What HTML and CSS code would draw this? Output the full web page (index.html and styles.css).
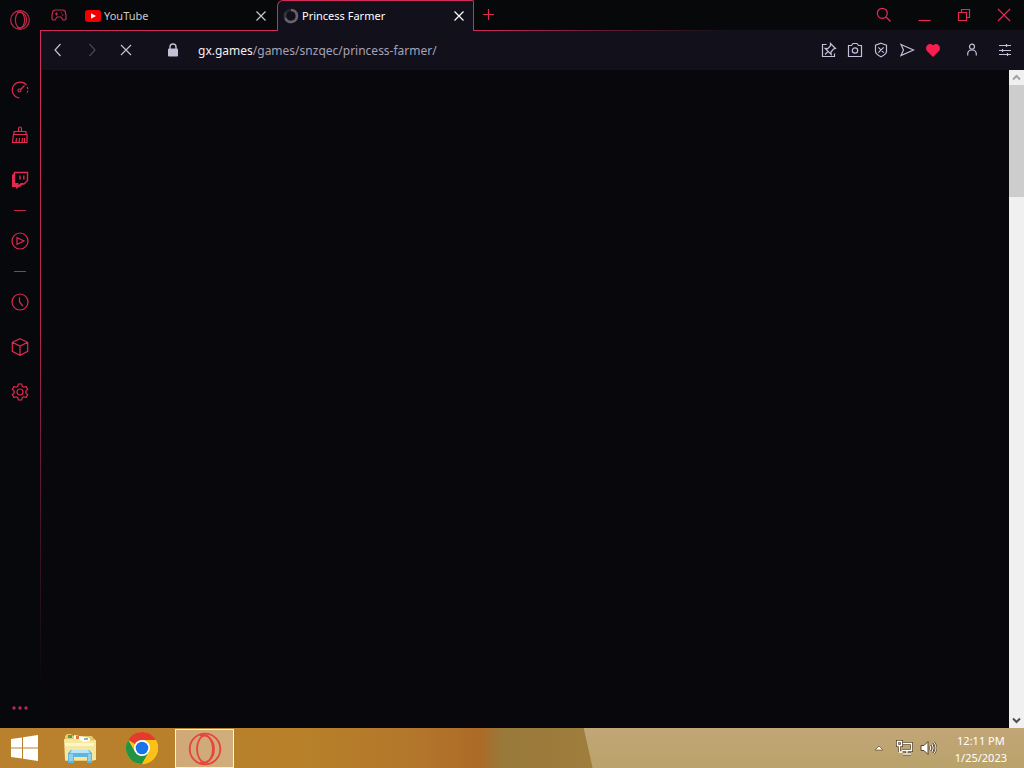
FILE: index.html
```html
<!DOCTYPE html>
<html lang="en">
<head>
<meta charset="utf-8">
<title>Princess Farmer</title>
<link rel="stylesheet" href="styles.css">
</head>
<body>
<div class="browser">
  <nav class="sidebar" aria-label="Sidebar">
    <button class="side-btn logo" aria-label="Opera menu"><svg width="20" height="20" viewBox="0 0 20 20"><circle cx="10" cy="10" r="9.3"/><ellipse cx="10" cy="10" rx="4.600" ry="7.800"/><path d="M7 2.400C11 .8 16.500 4 16.500 10S11 19.200 7 17.600"/></svg></button>
    <button class="side-btn" aria-label="GX Control"><svg width="18" height="18" viewBox="0 0 18 18"><path d="M8.500 17A8 8 0 1 1 15.500 4"/><path d="M16.300 6A8 8 0 0 1 15.500 13" stroke-dasharray="2 1.500"/><circle cx="8.500" cy="9.500" r="1.500"/><path d="M9.500 8.500l4-4"/></svg></button>
    <button class="side-btn" aria-label="GX Cleaner"><svg width="18" height="18" viewBox="0 0 18 18"><path d="M7.500 5V2.500a1.500 1.500 0 0 1 3 0V5M3 8V5.500h12V8M2.500 8.500h13.500v8H1.500zM5 16.500l.5-4.500M8 16.500l.5-4.500M11 16.500l.5-4.500M13.500 16v-4"/></svg></button>
    <button class="side-btn" aria-label="Twitch"><svg width="18" height="18" viewBox="0 0 18 18"><path class="solid" d="M1 4l3-3v11h3v3l3-3h3l-4 4H7l-2 2v-2H1z"/><path d="M3.500 1.500h13v8L13 13h-3l-3 3v-3H3.500zM9 4.500v4M12.800 4.500v4" stroke-width="1.400"/></svg></button>
    <hr class="side-line">
    <button class="side-btn" aria-label="Player"><svg width="18" height="18" viewBox="0 0 18 18"><circle cx="9" cy="9" r="8"/><path d="M6 5.800v6.400L13 9z"/></svg></button>
    <hr class="side-line">
    <button class="side-btn" aria-label="History"><svg width="18" height="18" viewBox="0 0 18 18"><circle cx="9" cy="9" r="8"/><path d="M8.500 4.500V9l3.300 4"/></svg></button>
    <button class="side-btn" aria-label="Extensions"><svg width="18" height="18" viewBox="0 0 18 18"><path d="M9 .7l7.700 3.600v9L9 17.300l-7.700-4v-9zM1.300 4.300L9 8l7.700-3.700M9 8v9.300"/></svg></button>
    <button class="side-btn" aria-label="Settings"><svg width="18" height="18" viewBox="0 0 18 18"><circle cx="9" cy="9" r="3"/><path d="M7.300 1h3.400l.5 2.400 1.500.8 2.300-.8 1.700 3-1.800 1.600v2l1.800 1.600-1.700 3-2.300-.8-1.500.8-.5 2.400H7.300l-.5-2.400-1.500-.8-2.300.8-1.700-3L3.100 10V8L1.300 6.400l1.700-3 2.300.8 1.500-.8z"/></svg></button>
    <button class="side-btn more" aria-label="Sidebar setup"><svg width="18" height="6" viewBox="0 0 18 6"><g class="solid"><circle cx="3" cy="3" r="1.700"/><circle cx="9" cy="3" r="1.700"/><circle cx="15" cy="3" r="1.700"/></g></svg></button>
  </nav>
  <div class="window">
    <header class="tabbar">
      <button class="gx-corner" aria-label="GX Corner"><svg width="16" height="12" viewBox="0 0 16 12"><path d="M4 1h8l2 1 1 4v4l-1 1h-2l-2-3H6l-2 3H2l-1-1V6l1-4zM5.500 3.500v3M4 5h3M10 4h1M11 6h1.500"/></svg></button>
      <div class="tab">
        <svg width="16" height="12" viewBox="0 0 16 12"><rect width="16" height="12" rx="3" fill="#f00000"/><path d="M6 3.200v5.600L11 6z" fill="#fff"/></svg>
        <span class="tab-title">YouTube</span>
        <button class="tab-close" aria-label="Close YouTube"><svg width="12" height="12" viewBox="0 0 12 12"><path d="M1.500 1.500l9 9M10.500 1.500l-9 9"/></svg></button>
      </div>
      <div class="tab active">
        <svg width="16" height="16" viewBox="0 0 16 16" fill="none" stroke-width="2.600"><circle cx="8" cy="8" r="6" stroke="#28252f"/><path d="M8 2A6 6 0 1 1 2.300 10" stroke="#66636b"/><path d="M2.300 10A6 6 0 0 1 3 4.500" stroke="#38353f"/></svg>
        <span class="tab-title">Princess Farmer</span>
        <button class="tab-close" aria-label="Close Princess Farmer"><svg width="12" height="12" viewBox="0 0 12 12"><path d="M1.500 1.500l9 9M10.500 1.500l-9 9"/></svg></button>
      </div>
      <div class="tab-rest">
        <button class="new-tab" aria-label="New tab"><svg width="12" height="12" viewBox="0 0 12 12"><path d="M6.500 1v11M1 6.500h11"/></svg></button>
        <div class="controls">
          <button aria-label="Search tabs"><svg width="16" height="16" viewBox="0 0 16 16"><circle cx="6.300" cy="6.300" r="5"/><path d="M10 10l4.500 4.500"/></svg></button>
          <button aria-label="Minimize"><svg width="16" height="16" viewBox="0 0 16 16"><path d="M2.500 13.500h12"/></svg></button>
          <button aria-label="Restore"><svg width="16" height="16" viewBox="0 0 16 16"><path d="M2.500 5.500h8v8h-8zM5.500 5V2.500h8v8H11"/></svg></button>
          <button aria-label="Close"><svg width="16" height="16" viewBox="0 0 16 16"><path d="M2 2l12 12M14 2L2 14"/></svg></button>
        </div>
      </div>
    </header>
    <div class="toolbar">
      <div class="nav-buttons">
        <button aria-label="Back"><svg width="16" height="16" viewBox="0 0 16 16"><path d="M10.500 2L5 8l5.500 6"/></svg></button>
        <button class="dim" aria-label="Forward" disabled><svg width="16" height="16" viewBox="0 0 16 16"><path d="M5.500 2L11 8l-5.500 6"/></svg></button>
        <button aria-label="Stop"><svg width="16" height="16" viewBox="0 0 16 16"><path d="M3 3l10 10M13 3L3 13"/></svg></button>
      </div>
      <svg class="lock" width="12" height="14" viewBox="0 0 12 14"><path d="M3 7V4a3 3 0 0 1 6 0v3" fill="none" stroke="#c4bed6" stroke-width="1.400"/><rect x="1" y="5.500" width="10" height="8" rx="1" fill="#c4bed6"/></svg>
      <div class="address"><a href="#page"><b>gx.games</b>/games/snzqec/princess-farmer/</a></div>
      <div class="actions">
        <button aria-label="Pin"><svg width="16" height="16" viewBox="0 0 16 16"><path d="M5.500 2.500h-4v12h12v-3M9.500 1.500l5 5-2 .5-2.500 3 .2 2.500-6-6 2.600.2 2.700-3zM7 9.500L4 12.500"/></svg></button>
        <button aria-label="Snapshot"><svg width="16" height="16" viewBox="0 0 16 16"><path d="M1.500 3.500h3l1.500-2h4l1.500 2h3v11h-13z"/><circle cx="8" cy="8.500" r="2.700"/></svg></button>
        <button aria-label="Ad blocker"><svg width="16" height="16" viewBox="0 0 16 16"><path d="M8 1.200l5.500 2v6.300c0 2.500-3 4-5.500 5.300-2.500-1.300-5.500-2.800-5.500-5.300V3.200zM5.300 5.300l5.400 5.400M10.700 5.300l-5.400 5.400"/></svg></button>
        <button aria-label="My Flow"><svg width="16" height="16" viewBox="0 0 16 16"><path d="M2 2.500L14.500 8 2 13.500 4.500 8z"/></svg></button>
        <button aria-label="Bookmark"><svg width="16" height="16" viewBox="0 0 16 16"><path class="heart" d="M8 15L2.500 9.500C-1.500 5.500 3.500-.5 8 3.200c4.500-3.700 9.500 2.300 5.500 6.300z"/></svg></button>
        <button class="profile" aria-label="Profile"><svg width="16" height="16" viewBox="0 0 16 16"><circle cx="8" cy="4.700" r="2.500"/><path d="M3.700 13.500V12c0-2.500 2-4 4.300-4s4.300 1.500 4.300 4v1.500"/></svg></button>
        <button class="setup" aria-label="Easy setup"><svg width="16" height="16" viewBox="0 0 16 16"><path d="M2 3.500h12M2 8.500h12M2 12.500h12M9.500 2v3M5.500 7v3M10.500 11v3"/></svg></button>
      </div>
    </div>
    <main class="page" id="page">
      <div class="scrollbar" aria-hidden="true">
        <svg width="15" height="15" viewBox="0 0 15 15"><path d="M4 9.500L7.500 6 11 9.500" stroke="#a3a3a3"/></svg>
        <div class="thumb"></div>
        <svg class="down" width="15" height="15" viewBox="0 0 15 15"><path d="M4 5.500L7.500 9 11 5.500" stroke="#505050"/></svg>
      </div>
    </main>
  </div>
</div>
<footer class="taskbar">
  <button class="task start" aria-label="Start"><svg width="27" height="26" viewBox="0 0 27 26"><path fill="#fff" d="M0 4l11-1.500v10H0zM12 2.300L27 0v12.500H12zM0 13.500h11v10L0 22zM12 13.500h15V26l-15-2.300z"/></svg></button>
  <button class="task" aria-label="File Explorer"><svg width="32" height="30" viewBox="0 0 32 30"><path d="M1 3l2-2h4l2 2h19l2 3h1v21l-2 1H1z" fill="#e6c968"/><path d="M4 2h4v3H4z" fill="#48a55d"/><path d="M10 2l16 3v4H10z" fill="#fffdf0"/><path d="M12 3h3v3h-3z" fill="#d47a32"/><path d="M20 5h4v2h-4z" fill="#7fb2d8"/><path d="M0 6h15l4 3 13-2v20H1z" fill="#f6e79e"/><path d="M1 10h29v3H1z" fill="#fdf6c8"/><path d="M4 30V20l3-3h18l3 3v10h-5v-6H10v6z" fill="#5fb5df"/><path d="M6 20l2-3h16l2 3z" fill="#b8e5f7"/><path d="M5 21h4v7H5zM24 21h3v7h-3z" fill="#8fd0ee"/></svg></button>
  <button class="task" aria-label="Google Chrome"><svg width="32" height="32" viewBox="0 0 32 32"><circle cx="16" cy="16" r="16" fill="#fbc116"/><path d="M16 16L2.140 8A16 16 0 0 1 29.860 8z" fill="#e33b2e"/><path d="M2.140 8A16 16 0 0 0 16 32L22.900 20 9.100 20z" fill="#229342"/><path d="M16 8h13.860A16 16 0 0 1 16 32L22.900 20z" fill="#fbc116"/><circle cx="16" cy="16" r="8" fill="#fff"/><circle cx="16" cy="16" r="6.300" fill="#1a73e8"/></svg></button>
  <button class="task current" aria-label="Opera GX"><svg width="34" height="34" viewBox="0 0 34 34" fill="none" stroke="#e8433f" stroke-width="1.800"><circle cx="17" cy="17" r="15.300"/><ellipse cx="17" cy="17" rx="8" ry="13.300"/><path d="M12 3.500C18 1 26 7 26 17s-8 16-14 13.500"/></svg></button>
  <div class="tray">
    <button aria-label="Show hidden icons"><svg width="10" height="6" viewBox="0 0 10 6"><path d="M1 5l4-4 4 4z" fill="#fff" stroke="#604c30" stroke-width=".7"/></svg></button>
    <button aria-label="Network"><svg width="18" height="16" viewBox="0 0 18 16"><g fill="none" stroke="#594329" stroke-width="3"><path d="M7 3.500h8.500v7H6M11 10v3M7 14h8M3.500 6v6"/><path d="M1.500 1.500h4v4h-4z"/></g><g fill="none" stroke="#fff" stroke-width="1.400"><path d="M7 3.500h8.500v7H6M11 10v3M7 14h8M3.500 6v6h3"/><path d="M1.500 1.500h4v4h-4z"/></g></svg></button>
    <button aria-label="Volume"><svg width="18" height="16" viewBox="0 0 18 16"><path d="M1 5.500h3L8 1.500v13l-4-4H1z" fill="#fff" stroke="#594329"/><g fill="none" stroke="#594329" stroke-width="2.200"><path d="M10 5.500q1.500 2.500 0 5M12 4q2.500 4 0 8M14 2.500q4 5.500 0 11"/></g><g fill="none" stroke="#fff"><path d="M10 5.500q1.500 2.500 0 5M12 4q2.500 4 0 8M14 2.500q4 5.500 0 11"/></g></svg></button>
    <time class="clock" datetime="2023-01-25T12:11"><span>12:11 PM</span><span>1/25/2023</span></time>
  </div>
</footer>
</body>
</html>
```
FILE: styles.css
```css
* { box-sizing: border-box; }
body {
  margin: 0;
  height: 100vh;
  display: flex;
  flex-direction: column;
  overflow: hidden;
  background: #08080c;
  font-family: "Noto Sans", "Open Sans", sans-serif;
  font-size: 11px;
}
button {
  display: flex;
  align-items: center;
  justify-content: center;
  flex: none;
  margin: 0;
  padding: 0;
  border: 0;
  background: none;
  color: inherit;
}
svg { display: block; flex: none; }
.browser { flex: 1; min-height: 0; display: flex; }

.sidebar {
  width: 40px;
  display: flex;
  flex-direction: column;
  align-items: center;
  background: #07080b;
}
.sidebar svg, .tabbar button svg, .toolbar button svg {
  fill: none;
  stroke: currentColor;
  stroke-width: 1.2;
}
.side-btn { width: 39px; height: 45px; color: #e32851; }
.logo { height: 40px; margin-bottom: 27px; color: #c32849; }
.side-line { width: 12px; height: 1px; margin: 8px 0 7px; border: 0; background: #c32849; }
.sidebar .solid { fill: currentColor; stroke: none; }
.more { height: 40px; margin-top: auto; color: #b52a50; }

.window {
  flex: 1;
  min-width: 0;
  display: flex;
  flex-direction: column;
}
.tabbar { display: flex; height: 31px; background: #07080a; color: #e32a55; }
.gx-corner { width: 37px; border-bottom: 1px solid #d02c5c; color: #c22a4e; }
.tab {
  display: flex;
  align-items: center;
  gap: 3px;
  width: 200px;
  padding: 1px 10px 0 8px;
  border-bottom: 1px solid #d02c5c;
  color: #c9c7cd;
}
.tab.active {
  width: 197px;
  padding: 0 8px 1px 5px;
  border: 1px solid #d02c5c;
  border-bottom: 0;
  border-radius: 6px 2px 0 0;
  background: #12101a;
  color: #fff;
}
.tab-title { flex: 1; white-space: nowrap; }
.tab-rest {
  flex: 1;
  display: flex;
  justify-content: space-between;
  padding-left: 8px;
  background: linear-gradient(90deg, #d02c5c 0, #6c1d39 120px, #15111b 250px) bottom / 100% 1px no-repeat;
}
.new-tab { width: 12px; height: 28px; }
.controls { display: flex; }
.controls button { width: 40px; height: 30px; color: #e72a55; }

.toolbar {
  display: flex;
  align-items: center;
  height: 39px;
  padding-bottom: 1px;
  border-left: 1px solid #d02c5c;
  background: #12101a;
}
.nav-buttons { display: flex; gap: 18px; padding-left: 9px; }
.toolbar button { width: 16px; height: 30px; color: #c4bed6; }
.toolbar .dim { color: #4b4756; }
.lock { margin: 0 19px 0 33px; }
.address { flex: 1; min-width: 0; font-size: 12px; white-space: nowrap; overflow: hidden; }
.address a { color: #a7a2b5; text-decoration: none; }
.address b { color: #f2f0f6; font-weight: 400; }
.actions { display: flex; gap: 10px; padding-right: 11px; }
.toolbar .profile { margin-left: 13px; }
.toolbar .setup { margin-left: 7px; }
.toolbar .heart { fill: #fa1e4e; stroke: none; }

.page {
  flex: 1;
  display: flex;
  justify-content: flex-end;
  background: linear-gradient(#d02c5c, #b0284f 40%, #43152a 70%, #08080c 94%) left / 1px 100% no-repeat, #08080c;
}
.scrollbar { display: flex; flex-direction: column; width: 15px; background: #f0f0f0; }
.scrollbar svg { fill: none; stroke-width: 2; }
.thumb { height: 17%; background: #cdcdcd; }
.down { margin-top: auto; }

.taskbar {
  position: relative;
  display: flex;
  height: 40px;
  background: linear-gradient(90deg, #b9802e 0, #b78029 30%, #b3772b 40%, #ac6b27 47%, #99793a 49%, #9e7d3d 57%);
}
.taskbar::before {
  content: "";
  position: absolute;
  inset: 0 0 0 57%;
  background: linear-gradient(#c2a677, #b9a26b);
  clip-path: polygon(0 0, 100% 0, 100% 100%, 9px 100%);
}
.task { width: 62px; }
.start { width: 49px; }
.current {
  width: 59px;
  margin: 1px 0 0 2px;
  border: 1px solid #fff3d0;
  background: linear-gradient(90deg, #d1a877, #cfae7c);
}
.tray {
  position: relative;
  display: flex;
  align-items: center;
  gap: 6px;
  margin-left: auto;
  padding-right: 17px;
}
.tray button:first-child { margin-right: 6px; }
.clock {
  display: flex;
  flex-direction: column;
  align-items: center;
  margin-left: 11px;
  padding-top: 1px;
  color: #fff;
  font-size: 11px;
  line-height: 17px;
}
```
